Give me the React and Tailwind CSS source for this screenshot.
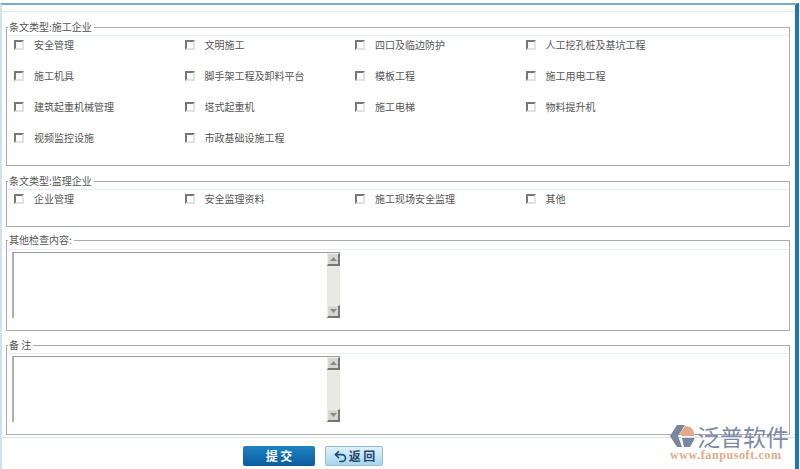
import React from "react";
import { Undo2 } from "lucide-react";

const construction = [
  "安全管理", "文明施工", "四口及临边防护", "人工挖孔桩及基坑工程",
  "施工机具", "脚手架工程及卸料平台", "模板工程", "施工用电工程",
  "建筑起重机械管理", "塔式起重机", "施工电梯", "物料提升机",
  "视频监控设施", "市政基础设施工程",
];
const supervision = ["企业管理", "安全监理资料", "施工现场安全监理", "其他"];

function Legend({ children }) {
  return (
    <legend className="ml-px h-[14px] pl-px pr-[2px] text-[10px] leading-[14px] tracking-normal text-[#555]">
      {children}
    </legend>
  );
}

function CheckGrid({ items }) {
  return (
    <div className="mt-px grid grid-cols-[repeat(4,170.5px)] auto-rows-[31px] border-t border-[#e3edf5] pt-px">
      {items.map((t) => (
        <label key={t} className="flex h-4 items-center pl-[7px] text-[10px] leading-4 text-[#555]">
          <input
            type="checkbox"
            className="h-[10px] w-[10px] appearance-none border-2 border-t-[#777] border-l-[#777] border-r-[#e2e2e2] border-b-[#e2e2e2] bg-white"
          />
          <span className="ml-[10px]">{t}</span>
        </label>
      ))}
    </div>
  );
}

function ScrollButton({ down }) {
  return (
    <div className="flex h-[13px] w-[13px] items-center justify-center border-r-2 border-b-2 border-t border-l border-r-[#777] border-b-[#777] border-t-[#eee] border-l-[#eee] bg-[#d8d6d0]">
      <svg width="7" height="4" viewBox="0 0 7 4">
        <path d={down ? "M0 0H7L3.5 4Z" : "M0 4H7L3.5 0Z"} fill="#8a8a8a" />
      </svg>
    </div>
  );
}

function TextBox() {
  return (
    <div className="ml-[5px] flex h-[66px] w-[328px]">
      <textarea className="h-full flex-1 resize-none border-t border-l-2 border-t-[#a09c98] border-l-[#b0b0ac] bg-white outline-none" />
      <div className="flex w-[13px] flex-col border-t border-[#a09c98]">
        <ScrollButton />
        <div className="flex-1 bg-[#e8e8e4]" />
        <ScrollButton down />
      </div>
    </div>
  );
}

function Box({ className, children }) {
  return <fieldset className={`border border-[#a9adb0] ${className}`}>{children}</fieldset>;
}

export default function App() {
  return (
    <div
      className="relative h-[469px] w-[800px] overflow-hidden bg-white pt-[3px]"
      style={{ fontFamily: '"Noto Sans CJK SC", "Liberation Sans", sans-serif' }}
    >
      <div className="mr-px flex h-[466px] flex-col border-t-2 border-r-4 border-l-2 border-t-[#7ca9c2] border-r-[#1b78b8] border-l-[#cfe2f0]">
        <div className="h-[7px] shrink-0 border-b border-[#dde9f3]" />
        <div className="flex flex-col pr-[5px] pl-[4px] pt-[8px]">
          <Box className="h-[146px]">
            <Legend>条文类型:施工企业</Legend>
            <CheckGrid items={construction} />
          </Box>
          <Box className="mt-[8px] h-[53px]">
            <Legend>条文类型:监理企业</Legend>
            <CheckGrid items={supervision} />
          </Box>
          <Box className="mt-[6px] h-[98px]">
            <Legend>其他检查内容:</Legend>
            <div className="mt-[2px] border-t border-[#e3edf5] pt-[2px]">
              <TextBox />
            </div>
          </Box>
          <Box className="mt-[7px] h-[97px]">
            <Legend>备 注</Legend>
            <div className="mt-px border-t border-[#e3edf5] pt-[2px]">
              <TextBox />
            </div>
          </Box>
        </div>
        <div className="mt-[2px] border-t border-[#dcdfe2] pt-[8px]">
          <div className="flex pl-[241px]">
            <button className="h-5 w-[72px] rounded-[2px] bg-gradient-to-b from-[#1f83c4] to-[#0a5b9e] text-[12px] font-bold leading-5 text-white">
              提 交
            </button>
            <button className="ml-[10px] flex h-5 w-[58px] items-center justify-center rounded-[2px] border border-[#93bdd4] bg-gradient-to-b from-[#dff1fa] to-[#a9d5ec] text-[12px] font-bold leading-4 text-[#24486e]">
              <Undo2 size={15} strokeWidth={2.6} className="mr-px text-[#14507f]" />
              <span>返 回</span>
            </button>
          </div>
        </div>
      </div>

      <div className="absolute top-[424px] left-[670px] w-[122px]">
        <div className="flex items-center">
          <svg width="27" height="24" viewBox="0 0 27 24" className="shrink-0">
            <path d="M7 1H15L8 12L12 23H7L0 12Z" fill="#7886a2" />
            <path d="M15 2C21 2 25 6 24 12H12L10 9Z" fill="#e3a98a" />
            <path d="M12 14H25L20 23H14Z" fill="#7886a2" />
          </svg>
          <span className="text-[23px] leading-6 whitespace-nowrap text-[#7c8aa6]">泛普软件</span>
        </div>
        <div
          className="mt-px text-[12px] leading-[12px] font-bold tracking-[0.6px] whitespace-nowrap text-[#e3a98a]"
          style={{ fontFamily: '"Liberation Serif", serif' }}
        >
          www.fanpusoft.com
        </div>
      </div>
    </div>
  );
}
